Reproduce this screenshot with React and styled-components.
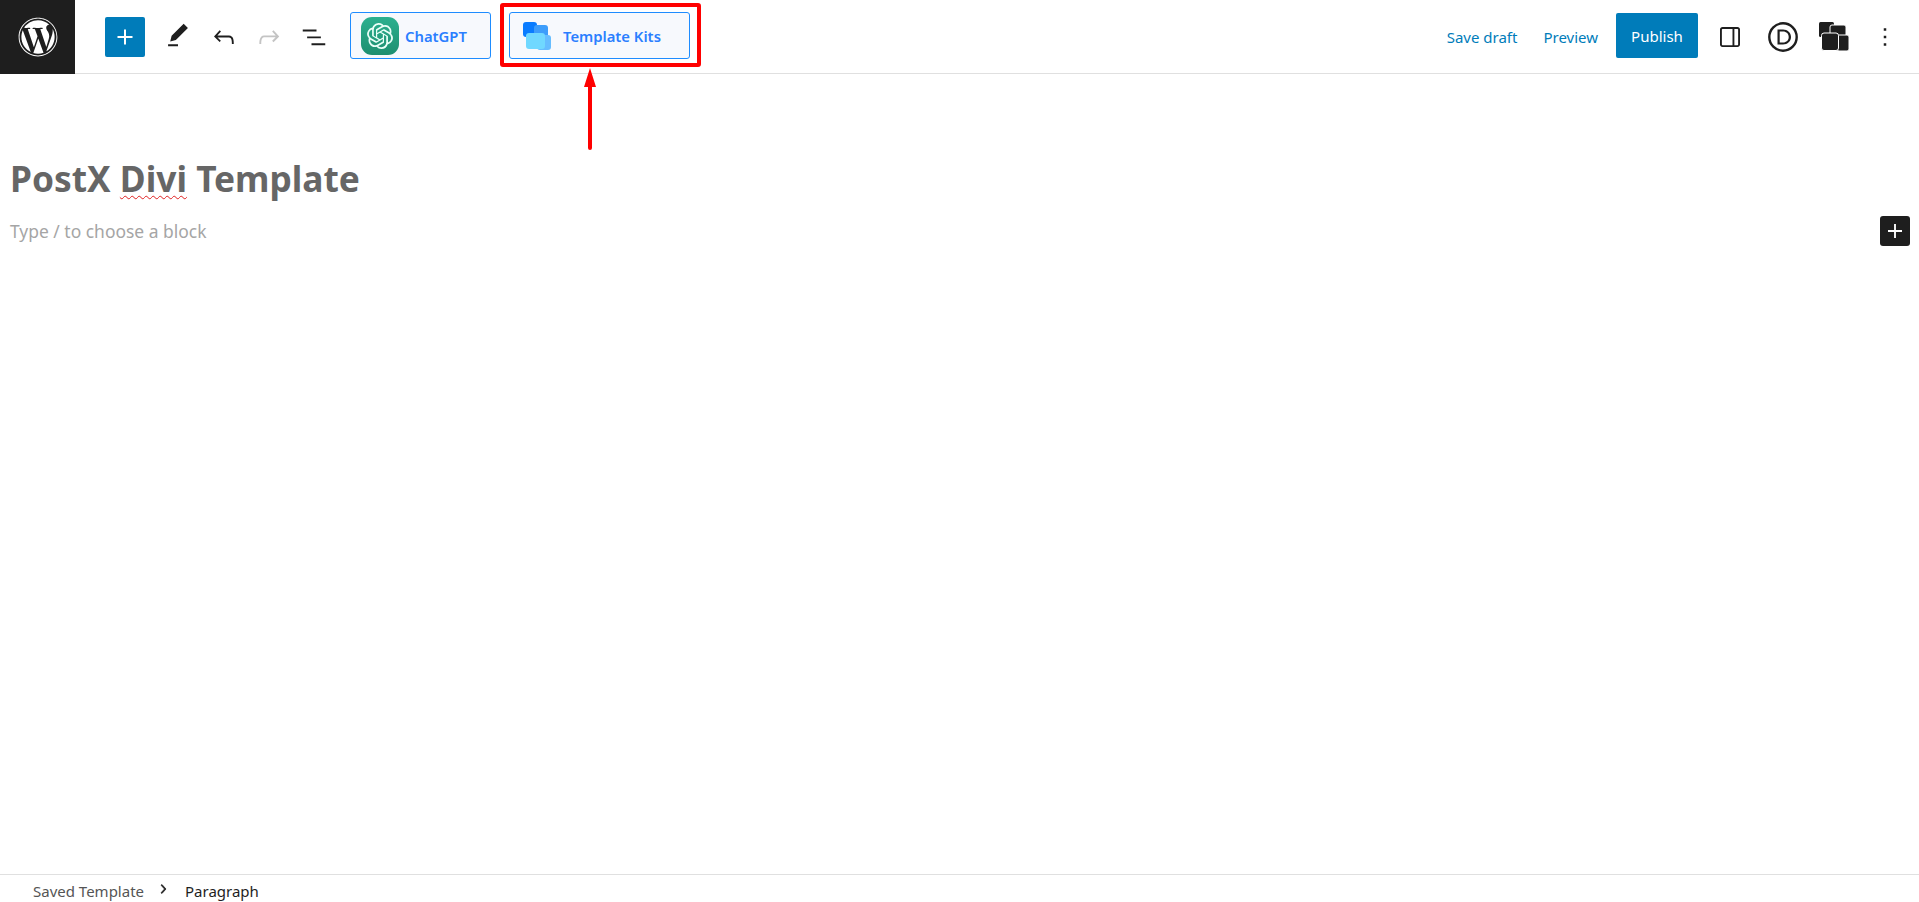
import styled, { createGlobalStyle } from "styled-components";
import { FaWordpress } from "react-icons/fa";
import { SiOpenai } from "react-icons/si";

const GlobalStyle = createGlobalStyle`
  html, body {
    margin: 0;
    padding: 0;
    background: #fff;
    font-family: "Noto Sans", "Open Sans", sans-serif;
  }
`;

const Page = styled.div`
  display: flex;
  flex-direction: column;
  height: 902px;
  overflow: hidden;
`;

const Header = styled.header`
  display: flex;
  align-items: center;
  justify-content: space-between;
  height: 73px;
  flex-shrink: 0;
  border-bottom: 1px solid #e0e0e0;
`;

const HeaderGroup = styled.div`
  display: flex;
  align-items: center;
  height: 100%;
`;

const LogoBlock = styled.div`
  display: flex;
  align-items: center;
  justify-content: center;
  width: 75px;
  height: 74px;
  background: #1e1e1e;
  color: #fff;
  font-size: 40px;
`;

const InserterButton = styled.div`
  display: flex;
  align-items: center;
  justify-content: center;
  width: 40px;
  height: 40px;
  margin: 0 16px 0 30px;
  border-radius: 2px;
  background: #007cba;
`;

const ToolIcon = styled.svg`
  display: block;
  width: ${({ size }) => size || 30}px;
  height: ${({ size }) => size || 30}px;
  margin-left: ${({ left }) => left || 0}px;
  margin-right: ${({ right }) => right || 0}px;
  margin-bottom: ${({ lift }) => lift || 0}px;
  fill: ${({ color }) => color || "#1e1e1e"};
  flex-shrink: 0;
`;

const PluginButton = styled.div`
  position: relative;
  display: flex;
  align-items: center;
  box-sizing: border-box;
  width: ${({ width }) => width}px;
  height: 47px;
  margin-left: ${({ left }) => left}px;
  margin-bottom: 2px;
  padding-left: ${({ inset }) => inset}px;
  gap: ${({ spacing }) => spacing}px;
  border: 1px solid #1e8cff;
  border-radius: 3px;
  background: #f7f9fd;
  color: #2b7fff;
  font-size: 14.8px;
  font-weight: 600;
`;

const GptBadge = styled.div`
  display: flex;
  align-items: center;
  justify-content: center;
  width: 38px;
  height: 38px;
  border-radius: 11px;
  background: linear-gradient(180deg, #2bb08f, #1f8f70);
  color: #eafff8;
  font-size: 26px;
`;

const KitsIcon = styled.div`
  position: relative;
  width: 28px;
  height: 28px;
`;

const KitsSquare = styled.span`
  position: absolute;
  left: ${({ x }) => x}px;
  top: ${({ y }) => y}px;
  width: ${({ w }) => w}px;
  height: ${({ h }) => h}px;
  border-radius: 3px;
  background: ${({ color }) => color};
`;

const RedFrame = styled.div`
  position: absolute;
  top: -10px;
  left: -10px;
  right: -12px;
  bottom: -9px;
  border: 4px solid #ff0000;
  border-radius: 3px;
`;

const RedArrow = styled.svg`
  position: absolute;
  top: 55px;
  left: 73px;
  width: 14px;
  height: 82px;
`;

const LinkText = styled.span`
  margin-right: ${({ right }) => right}px;
  color: #007cba;
  font-size: 15px;
`;

const PublishButton = styled.div`
  display: flex;
  align-items: center;
  justify-content: center;
  width: 82px;
  height: 45px;
  margin-bottom: 2px;
  border-radius: 2px;
  background: #007cba;
  color: #fff;
  font-size: 15px;
`;

const Editor = styled.main`
  flex: 1;
  display: flex;
  flex-direction: column;
  padding: 0 9px 0 10px;
`;

const Title = styled.h1`
  margin: 80px 0 0 0;
  color: #666;
  font-size: 35.3px;
  line-height: 48px;
  font-weight: 700;
`;

const Misspelled = styled.span`
  text-decoration: underline wavy #e02020 1px;
  text-underline-offset: 3px;
`;

const BlockRow = styled.div`
  display: flex;
  align-items: center;
  justify-content: space-between;
  margin-top: 14px;
`;

const Placeholder = styled.p`
  margin: 0;
  color: #a5a5a5;
  font-size: 17.45px;
  line-height: 30px;
`;

const AddBlockButton = styled.div`
  display: flex;
  align-items: center;
  justify-content: center;
  width: 30px;
  height: 30px;
  border-radius: 3px;
  background: #1e1e1e;
`;

const Footer = styled.footer`
  display: flex;
  align-items: center;
  flex-shrink: 0;
  box-sizing: border-box;
  height: 28px;
  padding: 5px 0 0 33px;
  border-top: 1px solid #e0e0e0;
  font-size: 15px;
`;

const Crumb = styled.span`
  color: ${({ current }) => (current ? "#1e1e1e" : "#555")};
`;

const CrumbChevron = styled.svg`
  width: 18px;
  height: 18px;
  margin: 0 13px 5px 10px;
  fill: #1e1e1e;
  stroke: #1e1e1e;
  stroke-width: 1;
`;

const PlusPath = "M18 11.2h-5.2V6h-1.6v5.2H6v1.6h5.2V18h1.6v-5.2H18z";

export default function App() {
  return (
    <Page>
      <GlobalStyle />
      <Header>
        <HeaderGroup>
          <LogoBlock>
            <FaWordpress />
          </LogoBlock>
          <InserterButton>
            <ToolIcon viewBox="0 0 24 24" color="#fff">
              <path d={PlusPath} />
            </ToolIcon>
          </InserterButton>
          <ToolIcon viewBox="0 0 24 24" size={34} lift={3}>
            <path d="m19 7-3-3-8.5 8.5-1 4 4-1L19 7Zm-7 11.5H5V20h7v-1.5Z" />
          </ToolIcon>
          <ToolIcon viewBox="0 0 24 24" left={14}>
            <path d="M18.3 11.7c-.6-.6-1.4-.9-2.3-.9H6.7l2.9-3.3-1.1-1-4.5 5L8.5 16l1-1-2.7-2.7H16c.5 0 .9.2 1.3.5 1 1 1 3.4 1 4.5v.3h1.5v-.2c0-1.500 0-4.300-1.500-5.700z" />
          </ToolIcon>
          <ToolIcon viewBox="0 0 24 24" left={15} color="#c4c4c4">
            <path d="M15.6 6.5l-1.1 1 2.9 3.3H8c-.9 0-1.7.3-2.3.9-1.4 1.5-1.4 4.2-1.4 5.6v.2h1.5v-.3c0-1.1 0-3.5 1-4.5.3-.3.7-.5 1.3-.5h9.2L14.5 15l1.1 1.1 4.6-4.6-4.6-5z" />
          </ToolIcon>
          <ToolIcon viewBox="0 0 24 24" left={15}>
            <path d="M3 6h11v1.5H3V6Zm3.5 5.5h11V13h-11v-1.5ZM21 17H10v1.5h11V17Z" />
          </ToolIcon>
          <PluginButton width={141} left={21} inset={10} spacing={6}>
            <GptBadge>
              <SiOpenai />
            </GptBadge>
            ChatGPT
          </PluginButton>
          <PluginButton width={181} left={18} inset={13} spacing={12}>
            <KitsIcon>
              <KitsSquare x={0} y={0} w={14} h={15} color="#0a7cff" />
              <KitsSquare x={11} y={3} w={14} h={15} color="#3d9dfb" />
              <KitsSquare x={14} y={13} w={14} h={15} color="#66bdff" />
              <KitsSquare x={3} y={11} w={19} h={16} color="#70d8ff" />
            </KitsIcon>
            Template Kits
            <RedFrame />
            <RedArrow viewBox="0 0 14 82">
              <path d="M7 0 13 19H9V80a2 2 0 0 1-4 0V19H1Z" fill="#ff0000" />
            </RedArrow>
          </PluginButton>
        </HeaderGroup>
        <HeaderGroup>
          <LinkText right={26}>Save draft</LinkText>
          <LinkText right={18}>Preview</LinkText>
          <PublishButton>Publish</PublishButton>
          <ToolIcon viewBox="0 0 24 24" left={17}>
            <path d="M18 4H6c-1.1 0-2 .9-2 2v12c0 1.1.9 2 2 2h12c1.1 0 2-.9 2-2V6c0-1.1-.9-2-2-2zm-4 14.5H6c-.3 0-.5-.2-.5-.5V6c0-.3.2-.5.5-.5h8v13zm4.5-.5c0 .3-.2.5-.5.5h-2.5v-13H18c.3 0 .5.2.5.5v12z" />
          </ToolIcon>
          <ToolIcon viewBox="0 0 30 30" left={23}>
            <circle cx="15" cy="15" r="13.7" fill="none" stroke="#1e1e1e" strokeWidth="2.4" />
            <path
              fillRule="evenodd"
              d="M9.5 7.5H15c4.6 0 8 3.2 8 7.5s-3.4 7.5-8 7.5H9.5V7.5Zm2.2 2v11H15c3.4 0 5.700-2.300 5.700-5.500S18.400 9.500 15 9.500h-3.300Z"
            />
          </ToolIcon>
          <ToolIcon viewBox="0 0 30 30" left={21}>
            <rect x="0" y="0" width="15" height="15" rx="1.5" />
            <rect x="11" y="3" width="16" height="14" rx="2" stroke="#fff" strokeWidth="1" />
            <rect x="18" y="13" width="12" height="16" rx="2" stroke="#fff" strokeWidth="1" />
            <rect x="2.5" y="11" width="17" height="17.5" rx="2.5" stroke="#fff" strokeWidth="1" />
          </ToolIcon>
          <ToolIcon viewBox="0 0 24 24" left={21} right={19}>
            <path d="M13 19h-2v-2h2v2zm0-6h-2v-2h2v2zm0-6h-2V5h2v2z" />
          </ToolIcon>
        </HeaderGroup>
      </Header>
      <Editor>
        <Title>
          PostX <Misspelled>Divi</Misspelled> Template
        </Title>
        <BlockRow>
          <Placeholder>Type / to choose a block</Placeholder>
          <AddBlockButton>
            <ToolIcon viewBox="0 0 24 24" size={28} color="#fff">
              <path d={PlusPath} />
            </ToolIcon>
          </AddBlockButton>
        </BlockRow>
      </Editor>
      <Footer>
        <Crumb>Saved Template</Crumb>
        <CrumbChevron viewBox="0 0 24 24">
          <path d="M10.6 6 9.4 7l4.6 5-4.6 5 1.2 1 5.400-6z" />
        </CrumbChevron>
        <Crumb current>Paragraph</Crumb>
      </Footer>
    </Page>
  );
}
